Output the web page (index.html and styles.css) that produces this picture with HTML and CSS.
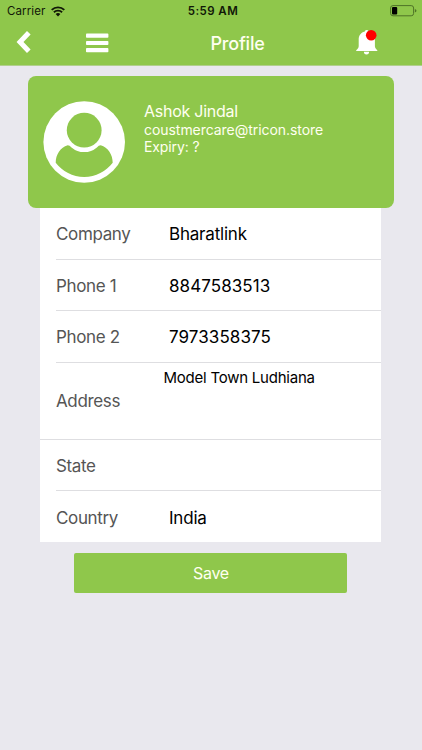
FILE: index.html
```html
<!DOCTYPE html>
<html lang="en">
<head>
<meta charset="utf-8">
<title>Profile</title>
<link rel="stylesheet" href="styles.css">
</head>
<body>
<header class="header">
  <div class="status">
    <div class="carrier"><span class="carrier-name">Carrier</span>
      <svg class="wifi" width="14" height="11" viewBox="0 0 14 11"><g fill="none" stroke="#111807" stroke-width="1.9"><path d="M.7 3.9a9 9 0 0 1 12.6 0"/><path d="M2.9 6.3a5.9 5.9 0 0 1 8.2 0"/></g><path fill="#111807" d="M4.6 8.1a3.6 3.6 0 0 1 4.8 0L7 10.6z"/></svg>
    </div>
    <span class="time">5:59 AM</span>
    <svg class="battery" width="27" height="12" viewBox="0 0 27 12"><rect x=".6" y=".6" width="23" height="10.2" rx="2.4" fill="none" stroke="#4f7327" stroke-width="1"/><rect x="2" y="2" width="5.2" height="7.4" rx="1" fill="#000"/><path d="M24.9 3.9q1.6.6 1.6 1.8t-1.6 1.8z" fill="#4f7327"/></svg>
  </div>
  <nav class="nav">
    <svg class="back" width="16" height="24" viewBox="0 0 16 24"><path d="M12.8 2.7 4 12l8.8 9.3" fill="none" stroke="#fff" stroke-width="5"/></svg>
    <svg class="menu" width="23" height="20" viewBox="0 0 23 20"><g fill="#fff"><rect y=".6" width="22.4" height="4.2" rx=".8"/><rect y="7.9" width="22.4" height="4.2" rx=".8"/><rect y="15.1" width="22.4" height="4.2" rx=".8"/></g></svg>
    <h1 class="title">Profile</h1>
    <svg class="bell" width="22" height="26" viewBox="0 0 22 26"><path fill="#fff" d="M8.8 2.5a2 2 0 0 1 3.8 0c4.2 1 6.3 4 6.3 8.2v6.2c0 1.8 1 3 2.4 4.3V22H.2v-.8c1.6-1.3 2.5-2.5 2.5-4.3v-6.2c0-4.2 2.1-7.2 6.1-8.2zM7.9 22.8h5.2a2.6 2.6 0 0 1-5.2 0z"/><circle cx="15.2" cy="6.2" r="5.3" fill="#f00"/></svg>
  </nav>
</header>
<main>
  <section class="profile">
    <svg class="avatar" width="82" height="82" viewBox="0 0 82 82"><circle cx="41.2" cy="41" r="40.8" fill="#fff"/><g fill="#8fc74b"><circle cx="41.2" cy="29.2" r="17.4"/><path d="M24.7 44.2q2 .1 3.8 2.2a19.6 19.6 0 0 0 25.4 0q1.8-2.1 3.8-2.2c7.3 2.2 12 9.3 12 17.5C63.2 70.3 52.7 75.9 41.2 75.9S19.2 70.3 12.7 61.7c0-8.2 4.7-15.3 12-17.5z"/></g></svg>
    <div class="identity">
      <div class="name">Ashok Jindal</div>
      <div class="email">coustmercare@tricon.store</div>
      <div class="expiry">Expiry: ?</div>
    </div>
  </section>
  <dl class="details">
    <div class="row"><dt>Company</dt><dd class="company">Bharatlink</dd></div>
    <div class="row"><dt>Phone 1</dt><dd class="phone">8847583513</dd></div>
    <div class="row"><dt>Phone 2</dt><dd class="phone">7973358375</dd></div>
    <div class="row address"><dt>Address</dt><dd>Model Town Ludhiana</dd></div>
    <div class="row state"><dt>State</dt><dd></dd></div>
    <div class="row country"><dt>Country</dt><dd>India</dd></div>
  </dl>
  <button class="save" type="button">Save</button>
</main>
</body>
</html>
```

FILE: styles.css
```css
* { box-sizing: border-box; }
body { margin: 0; min-height: 750px; background: #e9e8ee; font-family: Inter, "Liberation Sans", sans-serif; }
svg { display: block; flex: none; }
.header { height: 66px; background: #8fc74b; border-bottom: 1px solid #b1cf8d; }
.status { height: 22px; display: grid; grid-template-columns: 1fr auto 1fr; align-items: center; padding: 0 5px 0 7px; color: #111807; font-size: 11.5px; line-height: 22px; }
.carrier { display: flex; align-items: center; gap: 6px; }
.carrier-name { letter-spacing: .1px; }
.time { font-weight: 600; letter-spacing: .45px; padding-left: 2px; }
.battery { justify-self: end; }
.nav { height: 43px; display: flex; align-items: center; padding-left: 16px; }
.back { margin-top: -3px; }
.menu { margin: -2px 0 0 53.5px; }
.title { margin: 0 0 0 102px; width: 56px; color: #fffff0; font-size: 18px; line-height: 24px; font-weight: 500; letter-spacing: -.2px; white-space: nowrap; }
.bell { margin: -3px 0 0 89px; }
.profile { width: 365.5px; height: 132px; margin: 10px 0 0 28.3px; padding: 25px 15px; border-radius: 8px; background: #8fc74b; color: #fffff0; display: flex; }
.identity { margin-left: 18.7px; white-space: nowrap; }
.name { font-size: 16px; line-height: 20px; letter-spacing: -.25px; }
.email { font-size: 14px; line-height: 17px; letter-spacing: -.05px; }
.expiry { font-size: 14px; line-height: 17px; letter-spacing: -.1px; }
.details { width: 341px; margin: 0 0 0 40.4px; background: #fff; color: #000; }
.row { height: 51.6px; margin-left: 15.6px; display: grid; grid-template-columns: 113px 1fr; align-items: center; border-bottom: 1px solid #dedee1; }
dt { padding-top: 1.4px; color: #555; font-size: 17px; letter-spacing: -.35px; }
dd { margin: 1px 0 0; padding-top: 1px; font-size: 17px; letter-spacing: -.2px; }
.phone { letter-spacing: .08px; }
.address { height: 77px; margin-left: 0; padding-left: 15.6px; grid-template-columns: 107.5px 1fr; }
.address dd { align-self: start; margin-top: 4px; font-size: 15px; line-height: 20px; letter-spacing: -.23px; }
.country { height: 51px; border-bottom: 0; }
.save { display: block; width: 273px; height: 40px; margin: 10.5px 0 0 74.4px; padding: 0; border: 0; border-radius: 2px; background: #8fc74b; color: #fffff0; font: 400 16px/40px Inter, "Liberation Sans", sans-serif; letter-spacing: -.3px; }
```
